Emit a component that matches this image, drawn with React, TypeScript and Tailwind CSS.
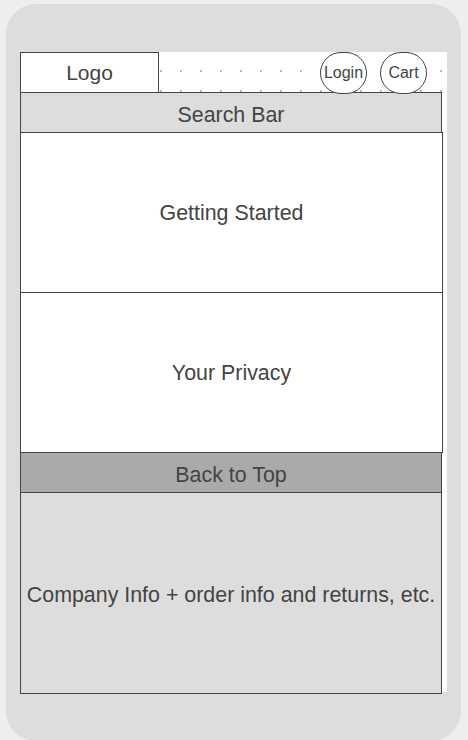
export default function App() {
  const font = { fontFamily: '"Liberation Sans", Arial, sans-serif' }
  return (
    <div className="h-[740px] w-[468px] overflow-hidden bg-[#eeeeee] pt-[4px] pl-[6px]" style={font}>
      {/* phone frame */}
      <div className="h-[737px] w-[455px] rounded-[30px] bg-[#dddddd] pt-[48px] pl-[14px]">
        {/* screen */}
        <div className="h-[640px] w-[427px] bg-white bg-[radial-gradient(circle,#bdbdbd_0.8px,transparent_1.2px)] bg-size-[20px_20px] bg-position-[-9px_9px] text-[#444444]">
          {/* header */}
          <div className="flex h-[41px] items-center">
            <div className="flex h-[41px] w-[139px] items-center justify-center border border-[#444444] bg-white text-[21px]">
              Logo
            </div>
            <div className="flex flex-1 justify-end gap-[13px] pr-[20px]">
              <div className="flex h-[42px] w-[47px] items-center justify-center rounded-full border border-[#444444] bg-white text-[16px]">
                Login
              </div>
              <div className="flex h-[42px] w-[47px] items-center justify-center rounded-full border border-[#444444] bg-white text-[16px]">
                Cart
              </div>
            </div>
          </div>
          <div className="-mt-px flex h-[41px] w-[422px] items-center justify-center border border-[#444444] bg-[#dddddd] pt-[6px] text-[21.4px]">
            Search Bar
          </div>
          <div className="-mt-px flex h-[161px] w-[423px] items-center justify-center border border-[#444444] bg-white pt-[2px] text-[21.4px]">
            Getting Started
          </div>
          <div className="-mt-px flex h-[161px] w-[423px] items-center justify-center border border-[#444444] bg-white pt-[2px] text-[21.4px]">
            Your Privacy
          </div>
          <div className="-mt-px flex h-[41px] w-[422px] items-center justify-center border border-[#444444] bg-[#aaaaaa] pt-[6px] text-[21.4px]">
            Back to Top
          </div>
          <div className="-mt-px flex h-[202px] w-[422px] items-center justify-center border border-[#444444] bg-[#dddddd] pt-[5px] text-[21.4px] whitespace-nowrap">
            Company Info + order info and returns, etc.
          </div>
        </div>
      </div>
    </div>
  )
}
